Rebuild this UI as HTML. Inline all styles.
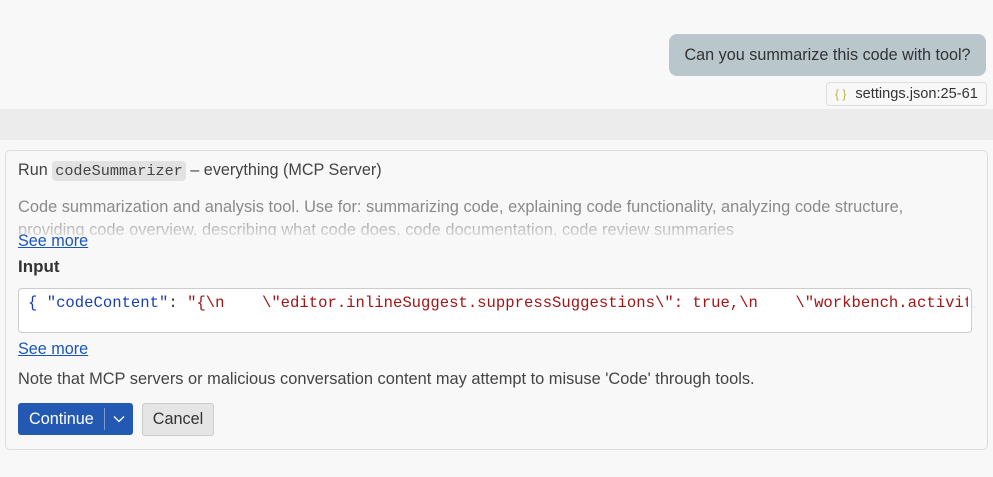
<!DOCTYPE html>
<html><head><style>
body{margin:0;width:993px;height:477px;background:#f8f8f8;font-family:"Liberation Sans",sans-serif;position:relative;overflow:hidden;color:#333}
.abs{position:absolute}
.bubble{left:669px;top:34px;width:317px;height:42px;background:#b9c6cc;border-radius:8px;font-size:16.2px;line-height:42px;text-align:center;color:#333}
.chip{left:826px;top:82px;width:159px;height:22px;border:1px solid #ddd;border-radius:4px;background:#f8f8f8;font-size:14.6px;line-height:22px;color:#333;white-space:nowrap}
.band{left:0;top:109px;width:993px;height:31px;background:#ececec}
.card{left:5px;top:150px;width:981px;height:298px;border:1px solid #ddd;border-radius:5px;background:#f8f8f8}
.code{font-family:"Liberation Mono",monospace}
a{color:#1a56b7;text-decoration:underline}
</style></head><body>
<div class="abs bubble">Can you summarize this code with tool?</div>
<div class="abs chip"><span style="color:#b5b54a;margin:0 9px 0 8px;font-size:12px">{ }</span>settings.json:25-61</div>
<div class="abs band"></div>
<div class="abs card"></div>
<div class="abs" style="left:18px;top:159px;font-size:16.2px;line-height:22px;color:#444;white-space:nowrap">Run <span class="code" style="background:#e2e2e2;border-radius:4px;padding:1px 3px;font-size:15.2px">codeSummarizer</span> – everything (MCP Server)</div>
<div class="abs" style="left:18px;top:196px;width:910px;height:40px;overflow:hidden;font-size:16.4px;line-height:23px;color:#8a8a8a;-webkit-mask-image:linear-gradient(#000 50%,rgba(0,0,0,.25) 100%)">Code summarization and analysis tool. Use for: summarizing code, explaining code functionality, analyzing code structure, providing code overview, describing what code does, code documentation, code review summaries</div>
<div class="abs" style="left:18px;top:231px;font-size:16.2px;line-height:20px"><a>See more</a></div>
<div class="abs" style="left:18px;top:256px;font-size:17px;font-weight:bold;line-height:22px;color:#333">Input</div>
<div class="abs" style="left:18px;top:288px;width:952px;height:43px;background:#fff;border:1px solid #ccc;border-radius:4px;overflow:hidden"></div>
<div class="abs code" style="left:28px;top:294px;width:940px;overflow:hidden;white-space:pre;font-size:15.6px;line-height:18px"><span style="color:#1a3fb3">{ "codeContent"</span><span style="color:#333">: </span><span style="color:#a31515">"{\n    \"editor.inlineSuggest.suppressSuggestions\": true,\n    \"workbench.activityBar</span></div>
<div class="abs" style="left:18px;top:339px;font-size:16.2px;line-height:20px"><a>See more</a></div>
<div class="abs" style="left:18px;top:369px;font-size:16.4px;line-height:20px;color:#444;white-space:nowrap">Note that MCP servers or malicious conversation content may attempt to misuse 'Code' through tools.</div>
<div class="abs" style="left:18px;top:403px;width:115px;height:32px;background:#2359b3;border-radius:3px;color:#fff;font-size:16.2px;line-height:32px">
<span style="margin-left:11px">Continue</span>
<span class="abs" style="left:86px;top:5px;width:1px;height:22px;background:#7e9ad0"></span>
<svg class="abs" style="left:95px;top:12px" width="12" height="8" viewBox="0 0 12 8"><path d="M1 1.5L6 6.5L11 1.5" fill="none" stroke="#fff" stroke-width="1.3"/></svg>
</div>
<div class="abs" style="left:142px;top:403px;width:70px;height:31px;background:#e5e5e5;border:1px solid #ccc;border-radius:3px;font-size:16.2px;line-height:31px;text-align:center;color:#333">Cancel</div>
</body></html>
